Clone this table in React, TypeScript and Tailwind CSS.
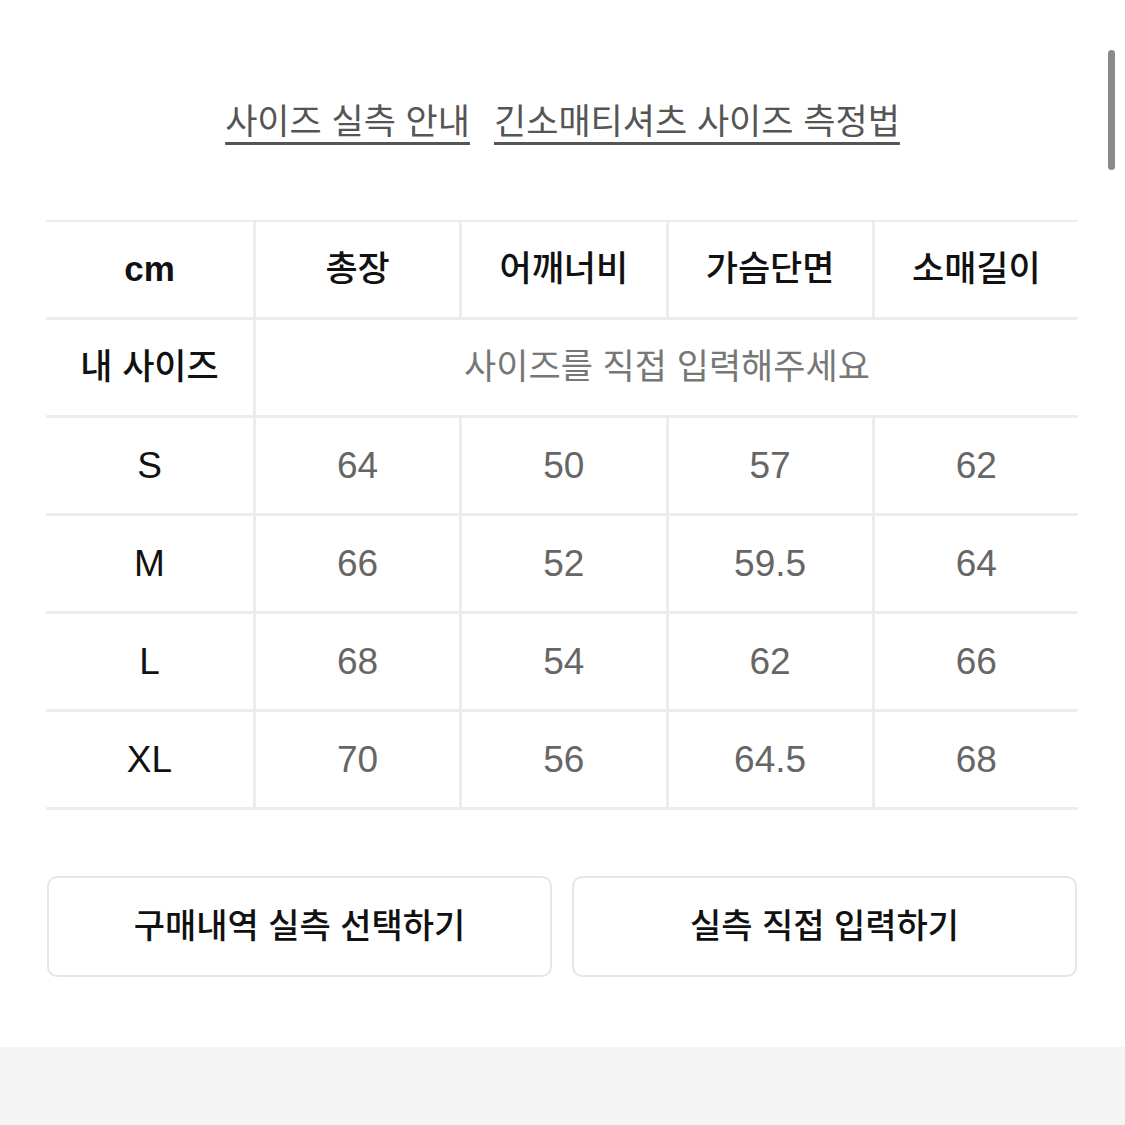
const sizes = [
  { label: "S", values: ["64", "50", "57", "62"] },
  { label: "M", values: ["66", "52", "59.5", "64"] },
  { label: "L", values: ["68", "54", "62", "66"] },
  { label: "XL", values: ["70", "56", "64.5", "68"] },
];

const headers = ["총장", "어깨너비", "가슴단면", "소매길이"];

const font = { fontFamily: '"Liberation Sans", "Noto Sans CJK KR", sans-serif' };

function Row({ children }: { children: React.ReactNode }) {
  return <div className="flex h-[98px] border-b-[3px] border-[#ececec]">{children}</div>;
}

function LabelCell({ children, size }: { children: React.ReactNode; size: string }) {
  return (
    <div
      className={`w-[210px] shrink-0 flex items-center justify-center border-r-[3px] border-[#ececec] text-[#111] ${size}`}
    >
      {children}
    </div>
  );
}

export default function App() {
  return (
    <div className="relative w-[1125px] h-[1125px] bg-white overflow-hidden" style={font}>
      <div className="h-[220px] flex justify-center gap-[24px] pt-[100px]">
        <a className="text-[35px] leading-[44px] text-[#555] underline decoration-[3px] underline-offset-[8px] decoration-[#555]">
          사이즈 실측 안내
        </a>
        <a className="text-[35px] leading-[44px] text-[#555] underline decoration-[3px] underline-offset-[8px] decoration-[#555]">
          긴소매티셔츠 사이즈 측정법
        </a>
      </div>

      <div className="mx-[46px] w-[1032px] border-t-2 border-[#ececec]">
        <Row>
          <LabelCell size="text-[35px] font-bold">cm</LabelCell>
          {headers.map((h, i) => (
            <div
              key={h}
              className={`flex-1 flex items-center justify-center text-[35px] font-medium text-[#111] ${
                i < 3 ? "border-r-[3px] border-[#ececec]" : ""
              }`}
            >
              {h}
            </div>
          ))}
        </Row>
        <Row>
          <LabelCell size="text-[35px] font-medium">내 사이즈</LabelCell>
          <div className="flex-1 flex items-center justify-center text-[35px] text-[#777]">
            사이즈를 직접 입력해주세요
          </div>
        </Row>
        {sizes.map((s) => (
          <Row key={s.label}>
            <LabelCell size="text-[37px] font-medium">{s.label}</LabelCell>
            {s.values.map((v, i) => (
              <div
                key={i}
                className={`flex-1 flex items-center justify-center text-[37px] text-[#666] ${
                  i < 3 ? "border-r-[3px] border-[#ececec]" : ""
                }`}
              >
                {v}
              </div>
            ))}
          </Row>
        ))}
      </div>

      <div className="mt-[66px] mx-[47px] grid grid-cols-2 gap-[20px] w-[1030px]">
        <button className="h-[101px] rounded-[10px] border-2 border-[#e6e6e6] bg-white text-[34px] font-medium text-[#111]">
          구매내역 실측 선택하기
        </button>
        <button className="h-[101px] rounded-[10px] border-2 border-[#e6e6e6] bg-white text-[34px] font-medium text-[#111]">
          실측 직접 입력하기
        </button>
      </div>

      <div className="absolute left-0 right-0 top-[1047px] bottom-0 bg-[#f4f4f4]" />
      <div className="absolute right-[10px] top-[50px] w-[7px] h-[120px] rounded-full bg-[#8a8a8a]" />
    </div>
  );
}
